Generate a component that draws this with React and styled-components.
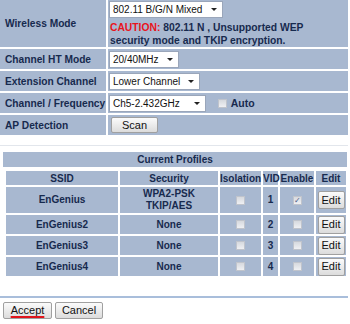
import React from "react";
import styled, { createGlobalStyle } from "styled-components";

const FONT = `"Liberation Sans", Arial, Helvetica, sans-serif`;

const GlobalStyle = createGlobalStyle`
  html, body {
    margin: 0;
    padding: 0;
    background: #ffffff;
  }
  body {
    font-family: ${FONT};
    width: 350px;
    height: 324px;
    overflow: hidden;
  }
`;

const Page = styled.div`
  width: 350px;
  display: flex;
  flex-direction: column;
`;

const SettingsTable = styled.div`
  width: 348px;
  display: flex;
  flex-direction: column;
  gap: 2px;
`;

const SettingRow = styled.div`
  display: grid;
  grid-template-columns: 106px 1fr;
  gap: 2px;
  height: ${(p) => p.h || 20}px;
`;

const Label = styled.div`
  background: #a8b8d0;
  color: #172a4e;
  font-weight: bold;
  font-size: 10.2px;
  display: flex;
  align-items: center;
  padding-left: 5px;
  white-space: nowrap;
`;

const Value = styled.div`
  background: #a8b8d0;
  display: flex;
  flex-direction: column;
  justify-content: center;
  padding: 0 0 0 1px;
  gap: 3px;
`;

const Inline = styled.div`
  display: flex;
  align-items: center;
  gap: ${(p) => p.gap || 12}px;
  padding-left: ${(p) => p.pl || 0}px;
`;

const SelectBox = styled.div`
  display: inline-flex;
  align-items: center;
  gap: ${(p) => p.gap || 7}px;
  align-self: flex-start;
  box-sizing: border-box;
  height: 17px;
  background: #ffffff;
  border: 1px solid #9aa6ba;
  font-size: 10px;
  color: #111;
  padding: 0 5px 0 3px;
  white-space: nowrap;
`;

const Caret = styled.span`
  width: 0;
  height: 0;
  border-left: 3px solid transparent;
  border-right: 3px solid transparent;
  border-top: 3.5px solid #222;
`;

const Caution = styled.div`
  font-size: 10.3px;
  font-weight: bold;
  color: #172a4e;
  line-height: 13px;
  padding-left: 1px;
`;

const Red = styled.span`
  color: #e8141c;
`;

const Check = styled.span`
  display: inline-block;
  vertical-align: middle;
  box-sizing: border-box;
  width: 9px;
  height: 9px;
  border: 1px solid #c0c4cc;
  background: linear-gradient(#d6d9de, #eff0f3);
  color: #4a5a88;
  font-size: 8px;
  font-weight: normal;
  line-height: 7px;
  text-align: center;
`;

const AutoLabel = styled.span`
  display: inline-flex;
  align-items: center;
  gap: 4px;
  font-size: 10.5px;
  font-weight: bold;
  color: #172a4e;
`;

const Button = styled.button`
  font-family: ${FONT};
  font-size: 11px;
  color: #111;
  height: ${(p) => p.h || 17}px;
  min-width: ${(p) => p.w || 0}px;
  padding: 0 ${(p) => p.px || 4}px;
  border: 1px solid #a0a0a0;
  border-radius: 2px;
  background: linear-gradient(#fbfbfb, #dcdcdc);
  line-height: 1;
  cursor: pointer;
`;

const Spacer = styled.div`
  height: 10px;
  border-bottom: 1px solid #e2e6ec;
  width: 348px;
`;

const Profiles = styled.div`
  width: 348px;
  padding: 6px 1px 0 3px;
  box-sizing: border-box;
`;

const ProfilesTitle = styled.div`
  background: #a8b8d0;
  color: #172a4e;
  font-weight: bold;
  font-size: 10px;
  text-align: center;
  height: 15px;
  line-height: 15px;
`;

const Table = styled.table`
  border-collapse: separate;
  border-spacing: 2px;
  table-layout: fixed;
  margin: 2px 0 0 4px;
  width: 344px;
  font-size: 10px;
  font-weight: bold;
  color: #172a4e;
`;

const Th = styled.th`
  background: #a8b8d0;
  height: 14px;
  padding: 0;
  text-align: center;
  white-space: nowrap;
`;

const Td = styled.td`
  background: #a8b8d0;
  height: ${(p) => p.h || 19}px;
  padding: 0;
  text-align: center;
  line-height: 12px;
`;

const Divider = styled.div`
  width: 348px;
  height: 2px;
  background: #a9bedb;
  margin-top: 18px;
`;

const Footer = styled.div`
  display: flex;
  gap: 3px;
  padding: 4px 0 0 3px;
`;

const AccentText = styled.span`
  text-decoration: underline;
  text-decoration-color: #e0141c;
  text-underline-offset: 2px;
  text-decoration-thickness: 1.5px;
`;

const profiles = [
  { ssid: "EnGenius", security: ["WPA2-PSK", "TKIP/AES"], vid: 1, enabled: true },
  { ssid: "EnGenius2", security: ["None"], vid: 2, enabled: false },
  { ssid: "EnGenius3", security: ["None"], vid: 3, enabled: false },
  { ssid: "EnGenius4", security: ["None"], vid: 4, enabled: false },
];

const columns = [
  { name: "SSID", width: 112 },
  { name: "Security", width: 98 },
  { name: "Isolation", width: 41 },
  { name: "VID", width: 15 },
  { name: "Enable", width: 34 },
  { name: "Edit", width: 30 },
];

export default function App() {
  return (
    <Page>
      <GlobalStyle />
      <SettingsTable>
        <SettingRow h={47}>
          <Label>Wireless Mode</Label>
          <Value>
            <SelectBox gap={9}>
              <span>802.11 B/G/N Mixed</span>
              <Caret />
            </SelectBox>
            <Caution>
              <Red>CAUTION:</Red> 802.11 N , Unsupported WEP
              <br />
              security mode and TKIP encryption.
            </Caution>
          </Value>
        </SettingRow>
        <SettingRow h={20}>
          <Label>Channel HT Mode</Label>
          <Value>
            <SelectBox gap={8}>
              <span>20/40MHz</span>
              <Caret />
            </SelectBox>
          </Value>
        </SettingRow>
        <SettingRow h={20}>
          <Label>Extension Channel</Label>
          <Value>
            <SelectBox gap={8}>
              <span>Lower Channel</span>
              <Caret />
            </SelectBox>
          </Value>
        </SettingRow>
        <SettingRow h={20}>
          <Label>Channel / Frequency</Label>
          <Value>
            <Inline gap={12}>
              <SelectBox gap={14}>
                <span>Ch5-2.432GHz</span>
                <Caret />
              </SelectBox>
              <AutoLabel>
                <Check />
                Auto
              </AutoLabel>
            </Inline>
          </Value>
        </SettingRow>
        <SettingRow h={20}>
          <Label>AP Detection</Label>
          <Value>
            <Inline pl={2}>
              <Button w={47} h={16}>Scan</Button>
            </Inline>
          </Value>
        </SettingRow>
      </SettingsTable>
      <Spacer />
      <Profiles>
        <ProfilesTitle>Current Profiles</ProfilesTitle>
      </Profiles>
      <Table>
        <colgroup>
          {columns.map((c) => (
            <col key={c.name} style={{ width: c.width }} />
          ))}
        </colgroup>
        <thead>
          <tr>
            {columns.map((c) => (
              <Th key={c.name}>{c.name}</Th>
            ))}
          </tr>
        </thead>
        <tbody>
          {profiles.map((p) => (
            <tr key={p.ssid}>
              <Td h={p.security.length > 1 ? 26 : 19}>{p.ssid}</Td>
              <Td>
                {p.security.map((s) => (
                  <div key={s}>{s}</div>
                ))}
              </Td>
              <Td>
                <Check />
              </Td>
              <Td>{p.vid}</Td>
              <Td>
                <Check>{p.enabled ? "✓" : ""}</Check>
              </Td>
              <Td>
                <Button w={27} px={2} h={18}>Edit</Button>
              </Td>
            </tr>
          ))}
        </tbody>
      </Table>
      <Divider />
      <Footer>
        <Button w={49} h={17}>
          <AccentText>Accept</AccentText>
        </Button>
        <Button w={48} h={17}>Cancel</Button>
      </Footer>
    </Page>
  );
}
